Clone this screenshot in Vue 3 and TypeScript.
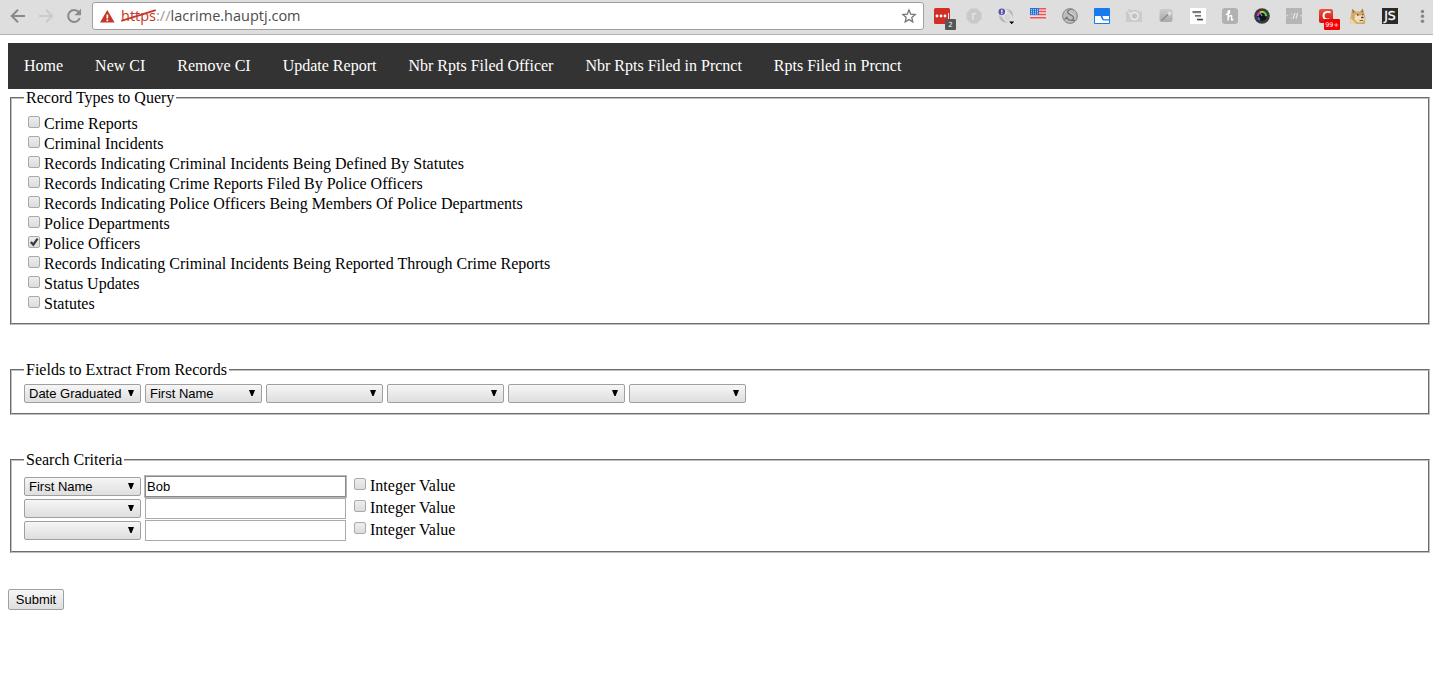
<script setup lang="ts">
import { ref } from 'vue'

const links = ['Home', 'New CI', 'Remove CI', 'Update Report', 'Nbr Rpts Filed Officer', 'Nbr Rpts Filed in Prcnct', 'Rpts Filed in Prcnct']

const records = ref([
  { label: 'Crime Reports', on: false },
  { label: 'Criminal Incidents', on: false },
  { label: 'Records Indicating Criminal Incidents Being Defined By Statutes', on: false },
  { label: 'Records Indicating Crime Reports Filed By Police Officers', on: false },
  { label: 'Records Indicating Police Officers Being Members Of Police Departments', on: false },
  { label: 'Police Departments', on: false },
  { label: 'Police Officers', on: true },
  { label: 'Records Indicating Criminal Incidents Being Reported Through Crime Reports', on: false },
  { label: 'Status Updates', on: false },
  { label: 'Statutes', on: false },
])

const options = ['', 'Date Graduated', 'First Name']
const fields = ref(['Date Graduated', 'First Name', '', '', '', ''])
const criteria = ref([
  { field: 'First Name', value: 'Bob', integer: false },
  { field: '', value: '', integer: false },
  { field: '', value: '', integer: false },
])
</script>

<template>
  <div class="window">
    <header class="toolbar">
      <svg class="nav-icons" width="92" height="34" viewBox="0 0 92 34" fill="none">
        <path d="M25 16H12M18 9.7L11.7 16l6.3 6.3" stroke="#8a8a8a" stroke-width="2" />
        <path d="M39 16h13M46 9.7l6.3 6.3-6.3 6.3" stroke="#cacaca" stroke-width="2" />
        <path d="M78.8 12.2A6 6 0 1 0 79.8 18" stroke="#8a8a8a" stroke-width="2" />
        <path d="M81 8.8v6.5h-6.5z" fill="#8a8a8a" />
      </svg>
      <div class="address">
        <svg class="warn" width="15" height="13" viewBox="0 0 15 13">
          <path d="M7.3 0L14.6 12.6H0z" fill="#c63626" />
          <path d="M6.5 4.4h1.7v4H6.5zM6.5 9.5h1.7v1.7H6.5z" fill="#fff" />
        </svg>
        <span class="url"><span class="scheme">https<svg width="36" height="14" viewBox="0 0 36 14"><path d="M.3 11.8L34.8 1.2" stroke="#c63626" stroke-width="1.8" /></svg></span><span class="slashes">://</span>lacrime.hauptj.com</span>
        <svg class="star" width="16" height="16" viewBox="0 0 16 16"><path d="M8 2l1.7 4.1 4.5.4-3.4 3 1 4.4L8 11.6l-3.8 2.3 1-4.4-3.4-3 4.5-.4z" fill="none" stroke="#777" stroke-width="1.3" /></svg>
      </div>
      <svg class="extensions" width="509" height="34" viewBox="924 0 509 34">
        <defs>
          <linearGradient id="grey" x2="0" y2="1"><stop stop-color="#ccc" /><stop offset="1" stop-color="#aaa" /></linearGradient>
          <linearGradient id="red" x2="0" y2="1"><stop stop-color="#ef5340" /><stop offset="1" stop-color="#c9160d" /></linearGradient>
          <radialGradient id="orb" cx=".35" cy=".3"><stop stop-color="#fff" /><stop offset="1" stop-color="#b5b5b5" /></radialGradient>
        </defs>
        <rect x="934" y="8" width="16" height="16" rx="1.5" fill="#d32d27" />
        <g fill="#fff"><circle cx="937" cy="16" r="1.4" /><circle cx="941" cy="16" r="1.4" /><circle cx="945" cy="16" r="1.4" /><path d="M948 13h.9v6h-.9z" /></g>
        <rect x="945" y="19" width="11" height="11" rx="1" fill="#555" />
        <text class="badge" x="950.5" y="27.3">2</text>

        <path d="M971 8.5h6l4.5 4.5v6l-4.5 4.5h-6l-4.5-4.5v-6z" fill="#c9c9c9" stroke="#d3d3d3" />
        <path d="M973 20v-7M973 15q1-2 3-1.4" stroke="#e4e4e4" stroke-width="1.5" fill="none" />

        <circle cx="1006" cy="15.5" r="7" fill="url(#orb)" />
        <circle cx="1007.6" cy="17.2" r="4.2" fill="#d6d6d6" stroke="#eee" />
        <circle cx="1001.8" cy="11.8" r="3.3" fill="#5650ae" />
        <path d="M1001.2 9.8h1.3v2.7h-1.3zM1001.2 13h1.3v1h-1.3z" fill="#fff" />
        <path d="M1009.2 21.5h5l-2.5 2.8z" fill="#000" />

        <path d="M1030 8h16v11h-16z" fill="#f4dada" />
        <path d="M1030 8.7h16M1030 11.5h16M1030 14.5h16M1030 17.7h16" stroke="#ed5554" stroke-width="1.4" />
        <path d="M1030 8h9v7h-9z" fill="#2374d7" />
        <path d="M1031 9.8h8M1031 11.8h8M1031 13.8h8" stroke="#d6e9ff" stroke-dasharray="1 1" />

        <circle cx="1070" cy="16" r="7.4" fill="#bdbdbd" stroke="#858585" />
        <path d="M1074 11.2c-2-2.3-6.6-1.6-6.3 1.2.3 2.5 6.5 2.7 6 5.7-.5 3.1-5.2 2.8-6.8.1M1064.5 19.5l3-2.8M1072 20l3 1" fill="none" stroke="#777" stroke-width="1.4" />
        <path d="M1075 11.8c-2-2.3-5.9-1.6-5.6 0 .3 1.6 6 2.2 5.3 6" fill="none" stroke="#ddd" stroke-width=".8" />

        <rect x="1094" y="8" width="16" height="16" rx="1" fill="#197af0" />
        <path d="M1095 16h5.2c1.2 0 1.2 4.5 3.5 4.5h5.3V23h-14zM1102 16h7v3.2h-4.8c-1.5 0-1-3.2-2.2-3.2z" fill="#fff" />

        <path d="M1126 11.5h4l1-1.5h7l1 1.5h3v10.5h-16zM1128 9.5h3v1.5h-3z" fill="#cbcbcb" />
        <circle cx="1134.5" cy="16" r="3.5" fill="#c2c2c2" stroke="#eee" stroke-width="1.4" />
        <path d="M1128 13.3h3" stroke="#eee" />

        <rect x="1159.5" y="9" width="13" height="13" rx="2.5" fill="url(#grey)" />
        <path d="M1161.5 20.5l7-6.4" stroke="#888" stroke-width="1.3" />
        <path d="M1169.5 11.2v4.6M1167.2 13.5h4.6M1168 12l3 3M1171 12l-3 3" stroke="#e3e3e3" stroke-width=".8" />

        <path d="M1190 8h16v16h-16z" fill="#fff" />
        <path d="M1192.5 12h8.5M1195 15.8h6M1197 19.5h6" stroke="#444" stroke-width="1.3" />
        <path d="M1193 13h8M1196 16.8h4M1198 20.5h5" stroke="#aaa" stroke-width=".6" />

        <rect x="1222" y="8" width="16" height="16" rx="3" fill="#afb1b2" />
        <path d="M1228.2 20.5V11.8q.3-1.5 1.3-.9.6 1.6-1.3 3.1M1225.8 14.6l2.4-.5M1228.4 17q3.4-3 3.2.2v2.4q.2 1 1.7-.3" fill="none" stroke="#fff" stroke-width="1.5" />

        <circle cx="1262" cy="16" r="7.8" fill="#373a3e" />
        <circle cx="1262" cy="16" r="5" fill="#11151b" />
        <path d="M1257.8 16.2a4.2 4.2 0 0 1 2.4-3.9" fill="none" stroke="#e53aaf" stroke-width="2" />
        <path d="M1260 12.4a4.2 4.2 0 0 1 4 0" fill="none" stroke="#f3b519" stroke-width="2" />
        <path d="M1263.5 12.2a4.2 4.2 0 0 1 2.6 4" fill="none" stroke="#58d246" stroke-width="2" />
        <path d="M1258 17.4a4.2 4.2 0 0 0 2 2.3" fill="none" stroke="#307ee3" stroke-width="1.8" />
        <path d="M1260 13.2l2.2 2.6" stroke="#22c6c7" stroke-width="1.2" />

        <path d="M1286 8h16v16h-16z" fill="#b5b5b5" />
        <path d="M1286.6 15.8h1.5M1290.8 14.2h1M1290.8 18h1M1293.3 18.5l1.6-5.5M1296 18.5l1.6-5.5M1300.2 15.8h1.5" stroke="#ececec" stroke-width="1.1" />

        <rect x="1319" y="9" width="14" height="14" rx="2" fill="url(#red)" />
        <path d="M1330.5 12.3q-6.8-1.7-7 3.4.1 4.5 6 3.5" fill="none" stroke="#fff" stroke-width="2" />
        <rect x="1324" y="19" width="16" height="11" rx="1" fill="#f50000" />
        <text class="badge small" x="1332" y="27.1">99+</text>

        <path d="M1350.5 24l-.2-6 1-4 .8-5.5 3.5 3h4.2l3-3.3 1.4 5.2 1.2 4-.5 6.6z" fill="#d5a968" />
        <path d="M1352.4 9.2l2.4 2.6-2 1.5zM1362.6 9l.9 4-2.3-1.2z" fill="#8e6a49" />
        <path d="M1355 15.2q1.5-1 2.8.6 2.5-.8 5.7-.6l1.4 3.5-2.4 3.5h-5l-3-3z" fill="#f2dfbb" />
        <path d="M1350.5 18l6 6h-6z" fill="#ead8b0" />
        <path d="M1357 14.2h1.5v1.2h-1.5zM1362.3 14h1.1v1.2h-1.1zM1361.2 16.8h2.3v1.5h-2.3zM1359.5 20.3h3.5v.7h-3.5z" fill="#3c3029" />

        <path d="M1382 8h16v16h-16z" fill="#292929" />
        <text class="js" x="1390" y="20.2">JS</text>
        <g fill="#858585"><circle cx="1422.5" cy="11.5" r="1.7" /><circle cx="1422.5" cy="16.3" r="1.7" /><circle cx="1422.5" cy="21.2" r="1.7" /></g>
      </svg>
    </header>

    <main>
      <nav><a v-for="link in links" :key="link">{{ link }}</a></nav>
      <form @submit.prevent>
        <fieldset class="types">
          <legend>Record Types to Query</legend>
          <label v-for="record in records" :key="record.label" class="row">
            <span class="check"><input v-model="record.on" type="checkbox"><svg v-if="record.on" width="13" height="13" viewBox="0 0 13 13"><path d="M2.8 6l2.5 2.6L9.6 2.6" fill="none" stroke="#3c3c3c" stroke-width="2.3" /></svg></span>{{ record.label }}
          </label>
        </fieldset>
        <fieldset class="extract">
          <legend>Fields to Extract From Records</legend>
          <div class="selects">
            <span v-for="(_, i) in fields" :key="i" class="drop"><select v-model="fields[i]"><option v-for="o in options" :key="o">{{ o }}</option></select></span>
          </div>
        </fieldset>
        <fieldset class="search">
          <legend>Search Criteria</legend>
          <div v-for="(item, i) in criteria" :key="i" class="criterion">
            <span class="drop"><select v-model="item.field"><option v-for="o in options" :key="o">{{ o }}</option></select></span>
            <input v-model="item.value" class="value" :class="{ active: i === 0 }" type="text">
            <label class="row"><span class="check"><input v-model="item.integer" type="checkbox"></span>Integer Value</label>
          </div>
        </fieldset>
        <button type="submit">Submit</button>
      </form>
    </main>
  </div>
</template>

<style>
body { margin: 0; background: #fff; }
</style>

<style scoped>
.window { height: 692px; overflow: hidden; font: 16px/18px "Liberation Serif", serif; color: #000; }
.toolbar { display: flex; box-sizing: border-box; height: 35px; background: #dedede; border-bottom: 1px solid #b3b3b3; }
.toolbar > svg { flex: none; }
.address { display: flex; align-items: center; box-sizing: border-box; width: 832px; height: 28px; margin-top: 2px; padding: 0 6px; border: 1px solid #a0a0a0; border-radius: 3px; background: #fff; }
.warn { margin-left: 1px; }
.url { flex: 1; margin-left: 6px; font: 14.5px/20px "Open Sans", sans-serif; color: #4c4c4c; white-space: nowrap; }
.scheme { position: relative; color: #c63626; }
.scheme svg { position: absolute; left: 0; top: 3px; }
.slashes { color: #999; }
.badge { font: 7px "DejaVu Sans", sans-serif; fill: #fff; text-anchor: middle; }
.badge.small { font-size: 6.5px; }
.js { font: 500 12.5px "DejaVu Sans", sans-serif; fill: #fff; stroke: #fff; stroke-width: .3px; text-anchor: middle; }
main { padding: 8px 1px 0 8px; }
nav { display: flex; height: 46px; background: #333; }
nav a { padding: 14px 16px; color: #fff; }
fieldset { box-sizing: border-box; min-width: 0; margin: 0 2px; padding: 5px 12px 0; border: 2px groove #c0c0c0; }
legend { height: 18px; padding: 0 2px; }
.types { height: 236px; padding-top: 6px; }
.types .row { height: 20px; line-height: 22px; }
.row { display: flex; }
.check { position: relative; display: block; width: 13px; height: 13px; margin: 3px 3px 0 4px; }
.check input { appearance: none; display: block; box-sizing: border-box; width: 12px; height: 12px; margin: 0; border: 1px solid #aaa; border-radius: 2px; background: linear-gradient(#eee, #dcdcdc); }
.check svg { position: absolute; left: 0; top: 0; }
.extract { height: 54px; margin-top: 36px; }
.selects { display: flex; gap: 4px; }
.drop { position: relative; display: block; width: 117px; height: 19px; }
.drop::after { content: ""; position: absolute; right: 7px; top: 6px; width: 6px; height: 6px; background: #000; clip-path: polygon(0 0, 100% 0, 60% 100%, 40% 100%); pointer-events: none; }
select { appearance: none; display: block; box-sizing: border-box; width: 117px; height: 19px; margin: 0; padding: 0 4px; border: 1px solid #a0a0a0; border-radius: 2px; background: linear-gradient(#f6f6f6, #dedede); font: 13px "Liberation Sans", sans-serif; color: #000; }
.search { height: 102px; margin-top: 36px; }
.criterion { display: flex; align-items: flex-start; height: 22px; }
.criterion .drop { margin-top: 3px; }
.value { appearance: none; box-sizing: border-box; width: 201px; height: 21px; margin: 2px 0 0 4px; padding: 0 1px; border: 1px solid #aaa; border-radius: 0; background: #fff; font: 13px "Liberation Sans", sans-serif; color: #000; }
.value.active { border-color: #888; box-shadow: 0 0 0 1px #b8b8b8; }
.criterion .row { margin: 1px 0 0 4px; line-height: 22px; }
button { display: block; box-sizing: border-box; width: 56px; height: 21px; margin-top: 36px; padding: 0; border: 1px solid #a0a0a0; border-radius: 2px; background: linear-gradient(#f6f6f6, #dedede); font: 13px "Liberation Sans", sans-serif; color: #000; }
</style>
